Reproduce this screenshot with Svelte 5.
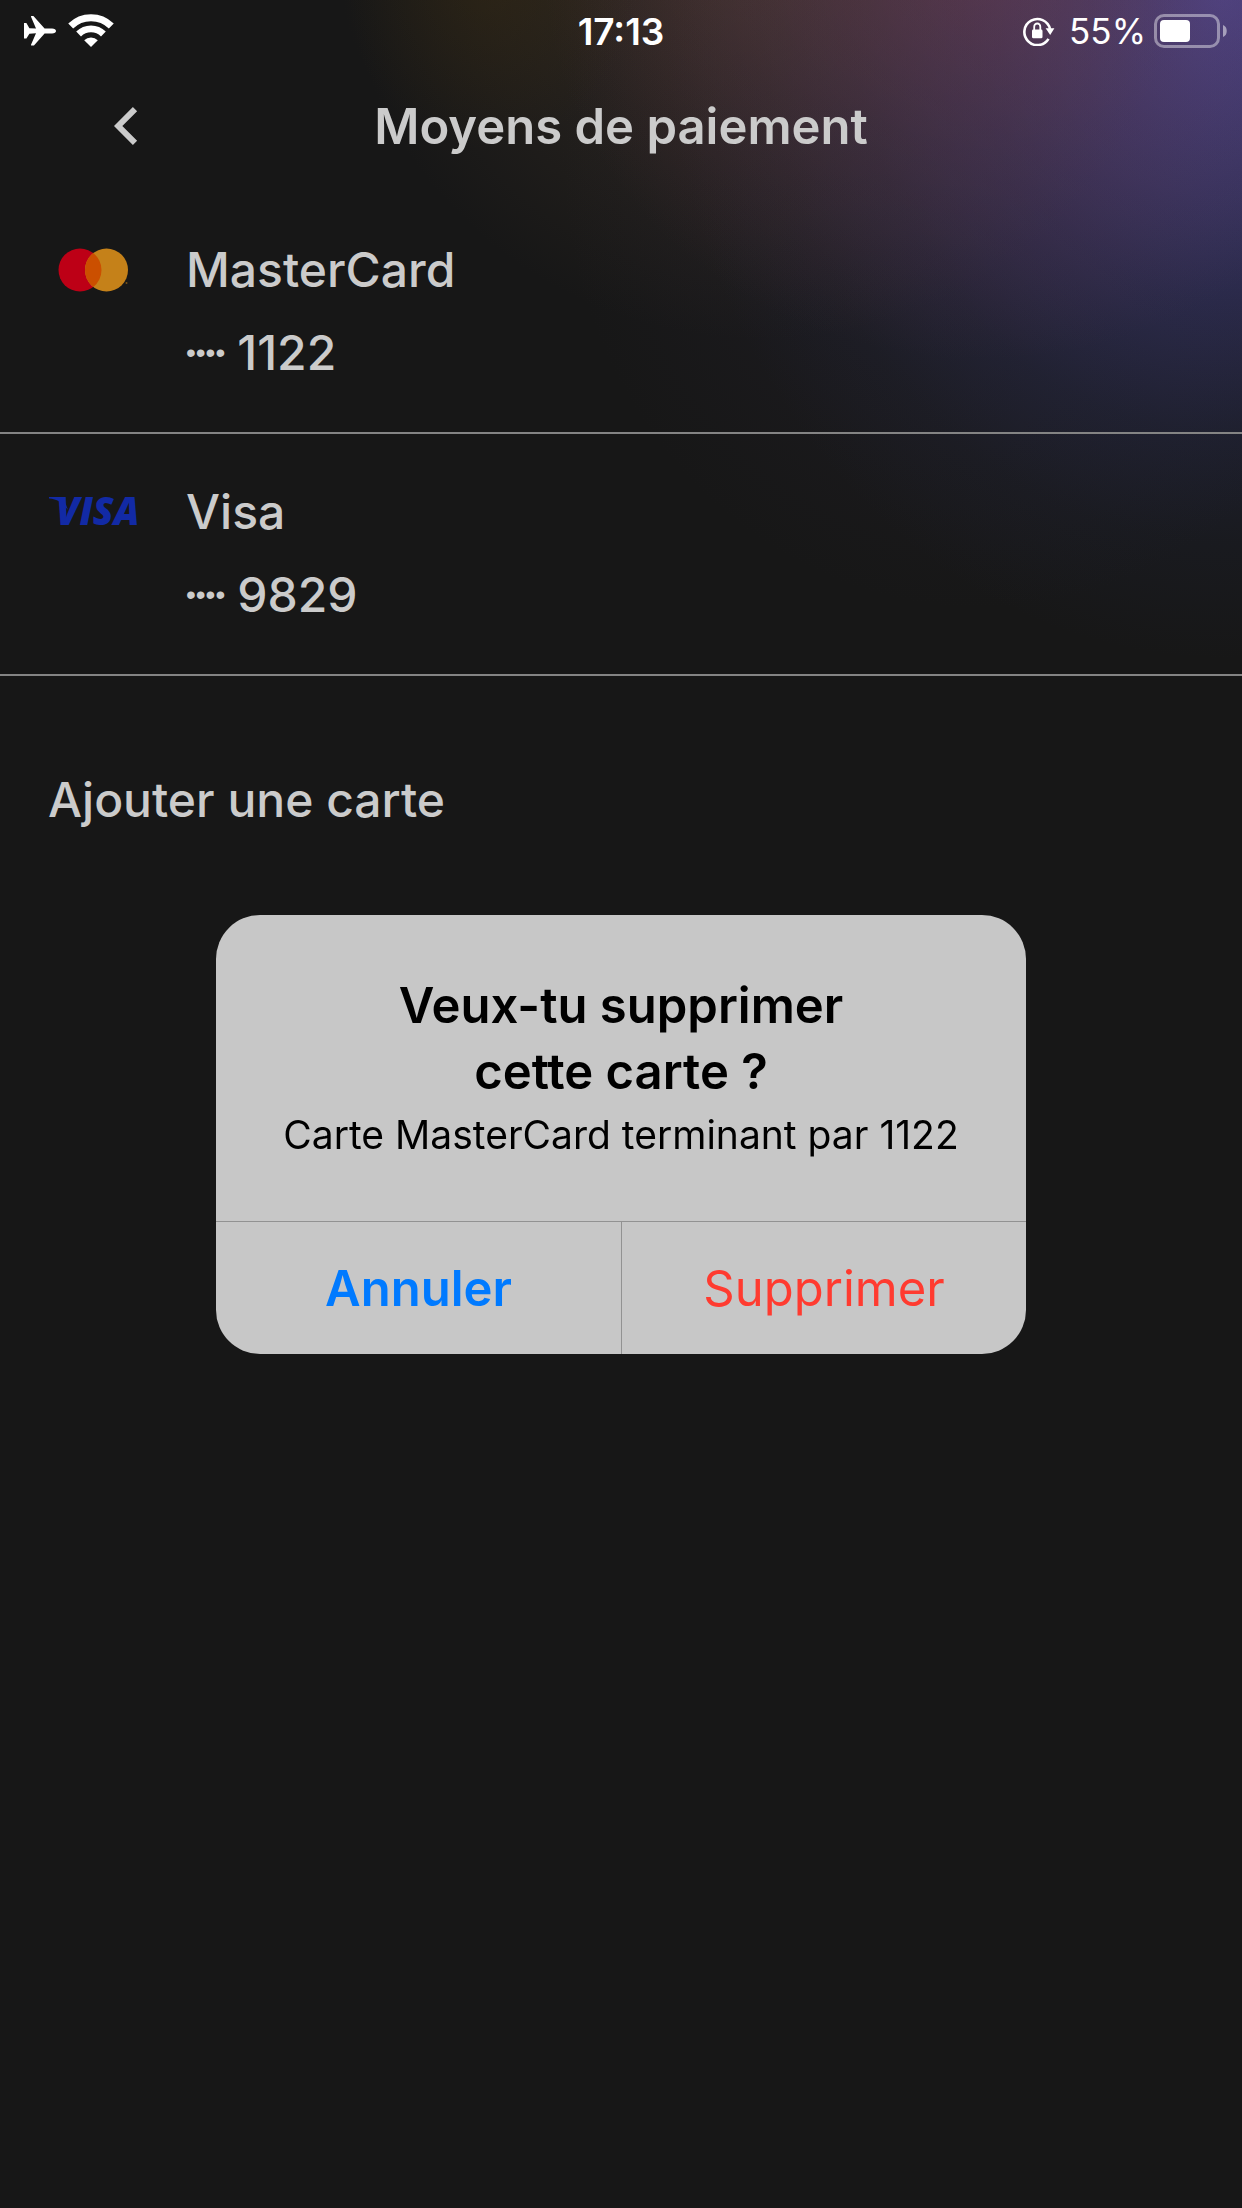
<script lang="ts">
  interface Card {
    brand: "mastercard" | "visa";
    name: string;
    last4: string;
  }

  const cards: Card[] = [
    { brand: "mastercard", name: "MasterCard", last4: "1122" },
    { brand: "visa", name: "Visa", last4: "9829" },
  ];

  let selected: Card | null = $state(cards[0]);

  function closeDialog() {
    selected = null;
  }

  function handleKeydown(e: KeyboardEvent) {
    if (e.key === "Escape") closeDialog();
  }
</script>

<svelte:window onkeydown={handleKeydown} />

<div class="screen">
  <div class="status-bar">
    <div class="status-left">
      <svg class="plane" width="32" height="30" viewBox="0 0 32 30" fill="#fff" aria-hidden="true">
        <path d="M0 7h2.4l3 5.2 6.6.4L7 .8C6.800 .3 7.100 0 7.600 0h1.800l11.200 12.500H28c2.500 0 4 1 4 2.400s-1.500 2.500-4 2.500h-7.400L10.400 29c-.3.400-.6.600-1 .6H7.600c-.5 0-.8-.3-.6-.8l5-11.500-6.600.4-3 4.800H0z" />
      </svg>
      <svg class="wifi" width="46" height="34" viewBox="0 0 46 34" aria-hidden="true">
        <g fill="none" stroke="#fff">
          <path d="M2.700 12A29 29 0 0 1 43.300 12" stroke-width="7" />
          <path d="M10.600 20A17.600 17.600 0 0 1 35.400 20" stroke-width="6.800" />
        </g>
        <path d="M16.200 26.200a9.800 9.800 0 0 1 13.600 0L23 33z" fill="#fff" />
      </svg>
    </div>
    <span class="time">17:13</span>
    <div class="status-right">
      <svg class="lock" width="32" height="30" viewBox="0 0 32 30" aria-hidden="true">
        <path d="M25.500 22.800A13 13 0 1 1 27 13" fill="none" stroke="#fff" stroke-width="2.600" />
        <path d="M22.600 12.200h8.800L27.200 19z" fill="#fff" />
        <rect x="9" y="13.500" width="10.500" height="8.800" rx="1.400" fill="#fff" />
        <path d="M11.200 14V10.800a3.050 3.300 0 0 1 6.100 0V14" fill="none" stroke="#fff" stroke-width="1.800" />
      </svg>
      <span class="percent">55%</span>
      <svg width="74" height="34" viewBox="0 0 74 34" aria-hidden="true">
        <rect x="1.500" y="1.500" width="63" height="31" rx="8.500" fill="none" stroke="#fff" stroke-opacity=".42" stroke-width="3" />
        <rect x="6" y="6" width="30" height="22" rx="4" fill="#fff" />
        <path d="M69 11c5 1.500 5 10.500 0 12z" fill="#fff" fill-opacity=".5" />
      </svg>
    </div>
  </div>

  <header>
    <button class="back" aria-label="Retour">
      <svg width="24" height="38" viewBox="0 0 24 38" aria-hidden="true">
        <path d="M21 2.200 4.200 19 21 35.800" fill="none" stroke="#cbcbcb" stroke-width="6" />
      </svg>
    </button>
    <h1>Moyens de paiement</h1>
  </header>

  <ul>
    {#each cards as card}
      <li>
        <button class="card" onclick={() => (selected = card)}>
          <span class="logo">
            {#if card.brand === "mastercard"}
              <svg width="70" height="44" viewBox="0 0 70 44" aria-hidden="true">
                <circle cx="22" cy="22" r="21.500" fill="#bd0016" />
                <circle cx="48.500" cy="22" r="21.500" fill="#c58119" />
                <path d="M35.250 5.070a21.500 21.500 0 0 1 0 33.860a21.500 21.500 0 0 1 0-33.860z" fill="#cb4f00" />
                <circle cx="68.500" cy="35" r="1" fill="#7a5317" />
              </svg>
            {:else}
              <svg width="108" height="68" viewBox="-4 -10 108 68" aria-hidden="true">
                <path d="M6 9h14l5 13C19 14 14 11 6 10.400z" fill="#122aa5" />
                <text x="13" y="37" fill="#122aa5" class="visa">VISA</text>
              </svg>
            {/if}
          </span>
          <span class="details">
            <span>{card.name}</span>
            <span class="number"><span class="dots">••••</span>{card.last4}</span>
          </span>
        </button>
      </li>
    {/each}
  </ul>

  <button class="add">Ajouter une carte</button>
</div>

{#if selected}
  <div class="overlay">
    <div class="dialog" role="alertdialog" aria-modal="true" aria-labelledby="dialog-title" aria-describedby="dialog-text">
      <div class="message">
        <h2 id="dialog-title">Veux-tu supprimer<br />cette carte ?</h2>
        <p id="dialog-text">Carte {selected.name} terminant par {selected.last4}</p>
      </div>
      <div class="actions">
        <button class="cancel" onclick={closeDialog}>Annuler</button>
        <button class="delete" onclick={closeDialog}>Supprimer</button>
      </div>
    </div>
  </div>
{/if}

<style>
  :global(body) {
    background: #171717;
  }

  .screen {
    min-height: 100vh;
    color: #cbcbcb;
    font-family: Inter, "Liberation Sans", sans-serif;
    background:
      radial-gradient(150px 180px at 490px -30px, rgba(70, 50, 10, 0.3), transparent),
      radial-gradient(420px 460px at calc(100% - 262px) 150px, rgba(62, 48, 78, 0.3), rgba(54, 46, 74, 0.14) 50%, transparent),
      radial-gradient(440px 400px at calc(100% - 260px) -40px, rgba(132, 66, 84, 0.5), rgba(132, 66, 84, 0.22) 48%, transparent),
      radial-gradient(420px 400px at calc(100% - 480px) -60px, rgba(92, 72, 54, 0.5), rgba(92, 72, 54, 0.2) 52%, transparent),
      radial-gradient(
        560px 670px at calc(100% - 20px) -10px,
        rgba(88, 84, 184, 0.74),
        rgba(88, 84, 184, 0.46) 31%,
        rgba(80, 80, 180, 0.32) 46%,
        rgba(60, 70, 150, 0.18) 66%,
        rgba(50, 65, 130, 0.08) 82%,
        transparent
      ),
      #171717;
  }

  button {
    padding: 0;
    border: 0;
    background: none;
    color: inherit;
    font: inherit;
    cursor: pointer;
  }

  .status-bar {
    display: grid;
    grid-template-columns: 1fr auto 1fr;
    align-items: center;
    height: 62px;
    color: #fff;
    font-size: 35px;
  }

  .status-left,
  .status-right {
    display: flex;
    align-items: center;
  }

  .status-left {
    gap: 12px;
    padding-left: 24px;
  }

  .status-right {
    justify-content: flex-end;
    gap: 8px;
    padding-right: 14px;
  }

  .lock {
    margin-right: 6px;
  }

  .time {
    font-size: 37px;
    font-weight: 600;
  }

  header {
    display: grid;
    grid-template-columns: 1fr auto 1fr;
    align-items: center;
    height: 128px;
  }

  .back {
    justify-self: start;
    display: flex;
    margin-left: 98px;
    padding: 16px;
  }

  h1,
  h2 {
    margin: 0;
    font-size: 49px;
    font-weight: 600;
  }

  h1 {
    grid-column: 2;
  }

  ul {
    margin: 2px 0 0;
    padding: 0;
    list-style: none;
  }

  li {
    border-bottom: 2px solid #848484;
  }

  .card {
    display: flex;
    width: 100%;
    height: 240px;
    padding: 36px 48px;
    font-size: 48px;
    line-height: 83px;
    text-align: left;
  }

  .logo {
    display: flex;
    align-items: center;
    justify-content: center;
    width: 90px;
    height: 83px;
    margin-right: 48px;
  }

  .logo svg {
    flex-shrink: 0;
  }

  .visa {
    font: italic 800 38px "Open Sans", "Noto Sans", sans-serif;
  }

  .details {
    display: flex;
    flex-direction: column;
    font-weight: 500;
  }

  .number {
    display: flex;
    align-items: center;
    gap: 12px;
  }

  .dots {
    font-family: "Liberation Sans", sans-serif;
    font-size: 28px;
  }

  .add {
    margin: 82px 48px;
    font-size: 48px;
    font-weight: 500;
    line-height: 83px;
  }

  .overlay {
    position: fixed;
    inset: 0;
    display: flex;
    align-items: center;
    justify-content: center;
    padding-top: 61px;
    font-family: Inter, "Liberation Sans", sans-serif;
  }

  .dialog {
    width: 810px;
    max-width: 90%;
    overflow: hidden;
    border-radius: 44px;
    background: #c7c7c7;
    color: #000;
    text-align: center;
  }

  .message {
    padding: 58px 40px 56px;
  }

  h2 {
    line-height: 66px;
  }

  p {
    margin: 0;
    font-size: 39px;
    line-height: 60px;
  }

  .actions {
    display: grid;
    grid-template-columns: 1fr 1fr;
    border-top: 1px solid #929292;
  }

  .actions button {
    height: 132px;
    font-size: 49px;
  }

  .cancel {
    color: #007aff;
    font-weight: 600;
  }

  .actions .delete {
    border-left: 1px solid #929292;
    color: #ff3b30;
  }
</style>
